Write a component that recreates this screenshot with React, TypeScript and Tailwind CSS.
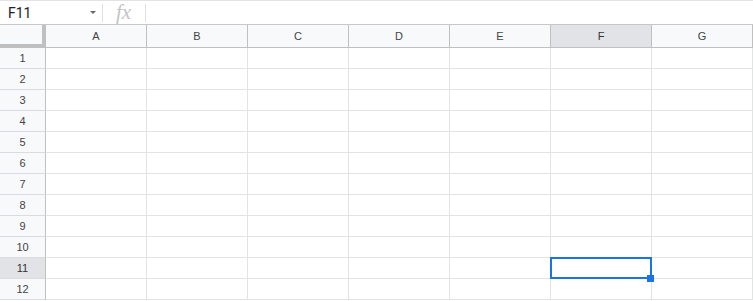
import React from "react";

const cols = ["A", "B", "C", "D", "E", "F", "G"];
const rows = Array.from({ length: 12 }, (_, i) => i + 1);

export default function App() {
  return (
    <div className="w-[753px] h-[301px] overflow-hidden bg-white font-['Liberation_Sans',Arial,sans-serif] text-[#444]">
      {/* formula bar */}
      <div className="flex h-[25px] items-center border-t border-b border-t-[#e3e3e3] border-b-[#c7c7c7]">
        <div className="flex w-[102px] items-center pl-[8px] pr-[6px]">
          <span className="flex-1 font-['Roboto',sans-serif] text-[14px] leading-none text-[#222]">F11</span>
          <span className="h-0 w-0 border-l-[3px] border-r-[3px] border-t-[3px] border-l-transparent border-r-transparent border-t-[#666]" />
        </div>
        <div className="h-[18px] w-px bg-[#e0e0e0]" />
        <div className="flex w-[42px] items-center justify-center pr-[1px]">
          <span className="font-['Liberation_Serif',serif] text-[21px] italic leading-none text-[#c4c4c4]">fx</span>
        </div>
        <div className="h-[18px] w-px bg-[#e0e0e0]" />
        <div className="flex-1" />
      </div>

      {/* grid */}
      <div className="grid grid-cols-[46px_repeat(7,101px)] grid-rows-[23px_repeat(12,21px)]">
        <div className="bg-[#f8f9fa] border-r-4 border-b-4 border-[#c0c0c0]" />
        {cols.map((c) => (
          <div
            key={c}
            className={
              "flex items-center justify-center border-r border-b border-[#c0c0c0] text-[11px] " +
              (c === "F" ? "bg-[#e1e3e6] text-[#333]" : "bg-[#f8f9fa]")
            }
          >
            {c}
          </div>
        ))}
        {rows.map((r) => (
          <React.Fragment key={r}>
            <div
              className={
                "flex items-center justify-center border-r border-b border-r-[#c0c0c0] border-b-[#dadce0] text-[11px] " +
                (r === 11 ? "bg-[#e1e3e6] text-[#333]" : "bg-[#f8f9fa]")
              }
            >
              {r}
            </div>
            {cols.map((c) => (
              <div key={c} className="relative border-r border-b border-[#e2e3e3]">
                {r === 11 && c === "F" && (
                  <div className="absolute -left-px -top-px z-10 h-[22px] w-[102px] border-2 border-[#1a73e8]">
                    <div className="absolute left-[95px] top-[16px] h-[7px] w-[7px] bg-[#1a73e8]" />
                  </div>
                )}
              </div>
            ))}
          </React.Fragment>
        ))}
      </div>
    </div>
  );
}
